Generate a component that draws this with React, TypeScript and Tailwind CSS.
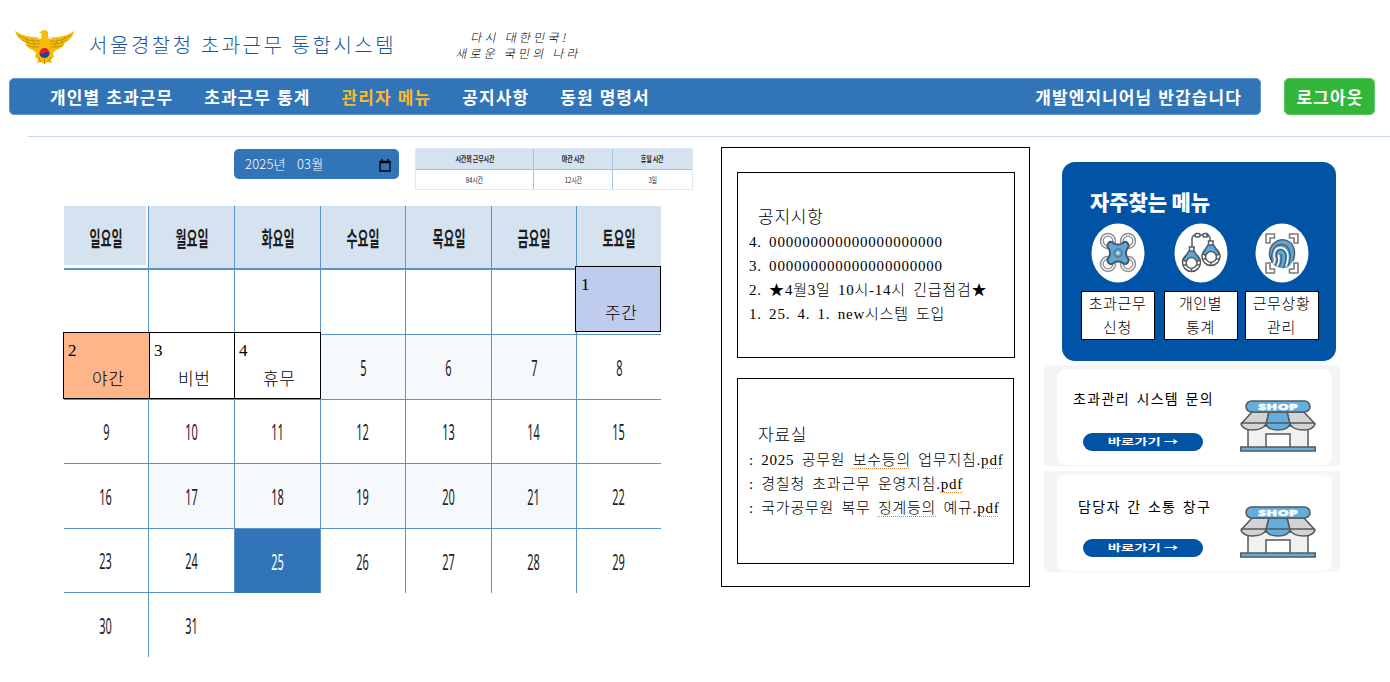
import React from "react";

const GOTHIC = "font-['Noto_Sans_CJK_KR',sans-serif]";
const BATANG = "font-['Liberation_Serif','Noto_Sans_CJK_KR',serif] font-light";

function Eagle() {
  return (
    <svg width="60" height="36" viewBox="0 0 60 36" className="block shrink-0">
      <path
        d="M0 2 Q9 8 24 8.500 L26 8 L27 4.500 L24 4 L27 1.500 Q31 0 33 3 L33 8 L36 8.500 Q51 8 59 2 Q58 10 50 13 Q49 19 41 21 L38 24 L39 28 L36 30 L37 34 L33 33 L29.500 35 L26 33 L22 34 L23 30 L20 28 L21 24 L18 21 Q11 19 10 13 Q2 10 0 2Z"
        fill="#f5bd0a"
      />
      <path
        d="M3 6 Q13 13 25 12 M7 11 Q15 16 25 15 M12 16 Q18 19 24 18 M56 6 Q47 13 35 12 M53 11 Q45 16 35 15 M48 16 Q42 19 36 18 M10 8 L14 14 M17 10 L20 17 M50 8 L46 14 M43 10 L40 17"
        stroke="#b98411"
        strokeWidth="0.800"
        fill="none"
      />
      <path d="M23 7.500 L27 8 L26 10 L23 10Z M36 7.500 L33 8 L34 10 L37 10Z" fill="#fff3c4" />
      <path d="M23 28 L26 33 M29.500 30 V35 M36 28 L33 33" stroke="#b98208" strokeWidth="0.900" />
      <circle cx="29.500" cy="24" r="5" fill="#e0242c" />
      <path d="M24.500 24 A5 5 0 0 0 34.500 24 Q32 22 29.500 24 T24.500 24Z" fill="#17479e" />
    </svg>
  );
}

function Header() {
  return (
    <header className="flex h-[78px] items-start pl-[15px]">
      <div className="pt-[29px]">
        <Eagle />
      </div>
      <h1 className={`${GOTHIC} ml-[14px] mt-[31px] w-[330px] text-[20px] font-light leading-[28px] tracking-[2.550px] whitespace-nowrap text-[#1a55a0]`}>
        서울경찰청 초과근무 통합시스템
      </h1>
      <p className={`${GOTHIC} ml-[39px] mt-[29px] w-[140px] -skew-x-12 text-[12px] font-light leading-[16px] tracking-[3.200px] whitespace-pre text-black`}>
        {"  다시 대한민국!\n새로운 국민의 나라"}
      </p>
    </header>
  );
}

const MENUS = [
  { label: "개인별 초과근무", on: false },
  { label: "초과근무 통계", on: false },
  { label: "관리자 메뉴", on: true },
  { label: "공지사항", on: false },
  { label: "동원 명령서", on: false },
];

function Nav() {
  return (
    <div className={`${GOTHIC} flex h-[37px] pl-[9px] text-[17px] font-bold tracking-[1.100px] whitespace-nowrap text-white`}>
      <nav className="flex w-[1252px] items-center gap-[31px] rounded-[5px] border border-[#5f96cd] bg-[#3175b8] pl-[40px] pr-[18px] [word-spacing:1px]">
        {MENUS.map((m) => (
          <a key={m.label} className={m.on ? "text-[#fdb924]" : ""}>
            {m.label}
          </a>
        ))}
        <span className="ml-auto">개발엔지니어님 반갑습니다</span>
      </nav>
      <button className="ml-[23px] w-[91px] rounded-[5px] border border-[#5fc765] bg-[#33b73b] pl-px">로그아웃</button>
    </div>
  );
}

function MonthPicker() {
  return (
    <div className="ml-[170px] mt-px flex h-[30px] w-[165px] shrink-0 items-center justify-between rounded-[5px] bg-[#3175b8] pl-[11px] pr-[8px] text-white">
      <span className={`${GOTHIC} text-[13px] font-light tracking-[0.200px] whitespace-pre [word-spacing:2.500px]`}>2025년  03월</span>
      <svg width="12" height="13" viewBox="0 0 12 13" className="mt-[2px]">
        <path d="M1 2.500 H11 V12 H1Z M1 3.500 H11 M3 0 V3 M9 0 V3" stroke="#000" strokeWidth="1.300" fill="none" />
      </svg>
    </div>
  );
}

function HoursTable() {
  const th = "flex items-center justify-center border-[#a3c2e2] bg-[#d5e3f0] border-b font-bold";
  const td = "flex items-center justify-center border-[#a3c2e2]";
  return (
    <div className={`${GOTHIC} ml-[16px] grid h-[42px] w-[278px] shrink-0 grid-cols-[118px_79px_79px] grid-rows-[21px_19px] border border-[#dfe9f4] text-[8px] tracking-[-0.200px] whitespace-nowrap text-[#222]`}>
      <div className={`${th} border-r`}><span className="scale-x-[0.750]">시간외 근무시간</span></div>
      <div className={`${th} border-r`}><span className="scale-x-[0.750]">야간 시간</span></div>
      <div className={th}><span className="scale-x-[0.750]">휴일 시간</span></div>
      <div className={`${td} border-r`}><span className="scale-x-[0.750]">84시간</span></div>
      <div className={`${td} border-r`}><span className="scale-x-[0.750]">12시간</span></div>
      <div className={td}><span className="scale-x-[0.750]">3일</span></div>
    </div>
  );
}

const DAYS = ["일요일", "월요일", "화요일", "수요일", "목요일", "금요일", "토요일"];

type Duty = { name: string; box: string };
const DUTIES: Record<number, Duty> = {
  1: { name: "주간", box: "-left-[2px] -top-[4px] h-[66px] w-[86px] bg-[#c0ccee] pl-[5px]" },
  2: { name: "야간", box: "-left-px -top-[3px] h-[67px] w-[87px] bg-[#ffb588] pl-[4px]" },
  3: { name: "비번", box: "left-0 -top-[3px] h-[67px] w-[86px] bg-white pl-[4px]" },
  4: { name: "휴무", box: "-left-px -top-[3px] h-[67px] w-[87px] bg-white pl-[4px]" },
};

function Calendar() {
  const cells = Array.from({ length: 42 }, (_, i) => i - 5);
  return (
    <div className={`${GOTHIC} mt-[16px] grid grid-cols-[85px_86px_86px_85px_86px_85px_84px] grid-rows-[64px_65px_65px_64px_65px_64px_64px]`}>
      {DAYS.map((d, i) => (
        <div
          key={d}
          className={`flex items-center justify-center border-b-2 border-[#5b92c9] bg-[#d5e3f0] text-[21px] font-bold text-[#1c1c1c] ${i < 6 ? "border-r" : ""} ${i === 0 ? "shadow-[inset_-2px_-3px_0_#fff]" : ""}`}
        >
          <span className="scale-x-[0.570] pt-px whitespace-nowrap">{d}</span>
        </div>
      ))}
      {cells.map((n, i) => {
        const col = i % 7;
        const row = Math.floor(i / 7);
        const duty = DUTIES[n];
        const tinted = (row === 1 || row === 3) && col > 0 && col < 6;
        const right = col < 6 && (row < 5 || col === 0);
        const bottom = row < 4 || (row === 4 && col < 2);
        const today = n === 25;
        return (
          <div
            key={i}
            className={`relative flex items-center justify-center border-[#5b92c9] ${right ? "border-r" : ""} ${bottom ? "border-b-[1.500px]" : ""} ${today ? "bg-[#3175b8] text-white" : tinted ? "bg-[#f5f9fc] text-[#222]" : "text-[#222]"}`}
          >
            {duty ? (
              <div className={`${BATANG} absolute z-10 border border-black text-black ${duty.box}`}>
                <div className="pt-[6px] text-[17px] leading-[24px]">{n}</div>
                <div className="pl-[24px] pt-[4px] text-[17px] leading-[26px] tracking-[0.700px]">{duty.name}</div>
              </div>
            ) : (
              n > 0 && n < 32 && (
                <span className="scale-x-[0.500] font-['Noto_Sans',sans-serif] text-[22px]">{n}</span>
              )
            )}
          </div>
        );
      })}
    </div>
  );
}

function Squiggle({ children }: { children: React.ReactNode }) {
  return (
    <span className="underline decoration-[#e8893a] decoration-dotted decoration-1 underline-offset-[3px] [text-decoration-skip-ink:none]">{children}</span>
  );
}

function Boards() {
  const line = "h-[24px] whitespace-nowrap";
  return (
    <section className={`${BATANG} ml-[29px] mt-[10px] h-[440px] w-[309px] border border-black pl-[15px] pt-[24px] text-[15px] leading-[24px] tracking-[0.770px] text-black [word-spacing:2.800px]`}>
      <div className="h-[186px] w-[278px] border border-black pl-[11px] pt-[32px]">
        <h2 className="h-[25px] pl-[9px] text-[17px] leading-[26px]">공지시항</h2>
        <p className={line}>4. 000000000000000000000</p>
        <p className={line}>3. 000000000000000000000</p>
        <p className={line}>2. ★4월3일 10시-14시 긴급점검★</p>
        <p className={line}>1. 25. 4. 1. new시스템 도입</p>
      </div>
      <div className="mt-[20px] h-[186px] w-[277px] border border-black pl-[11px] pt-[44px]">
        <h2 className="h-[25px] pl-[9px] text-[17px] leading-[26px]">자료실</h2>
        <p className={line}>: 2025 공무원 <Squiggle>보수등의</Squiggle> 업무지침.<Squiggle>pdf</Squiggle></p>
        <p className={line}>: 경칠청 초과근무 운영지침.<Squiggle>pdf</Squiggle></p>
        <p className={line}>: 국가공무원 복무 <Squiggle>징계등의</Squiggle> 예규.<Squiggle>pdf</Squiggle></p>
      </div>
    </section>
  );
}

function Drone() {
  const rotors = [[17, 18], [37, 18], [17, 41], [37, 41]];
  return (
    <svg width="54" height="60" viewBox="0 0 54 60" className="block">
      <ellipse cx="27" cy="30" rx="26.500" ry="29.500" fill="#fff" />
      {rotors.map(([x, y]) => (
        <g key={`${x}-${y}`} fill="none" stroke="#8d9093">
          <circle cx={x} cy={y} r="7.500" strokeWidth="1.500" />
          <circle cx={x} cy={y} r="4.800" strokeWidth="1.300" />
        </g>
      ))}
      <path
        d="M17.500 20 Q20 17.500 23 20.500 Q27 22.500 31 20.500 Q34 17.500 36.500 20 Q39 23 36 26 Q34 30 36 34 Q39 37 36.500 40 Q34 42.500 31 39.500 Q27 37.500 23 39.500 Q20 42.500 17.500 40 Q15 37 18 34 Q20 30 18 26 Q15 23 17.500 20Z"
        fill="#5aa7dd"
        stroke="#4c5359"
        strokeWidth="1.900"
      />
      <circle cx="27" cy="30" r="4" fill="#5aa7dd" stroke="#6f7579" strokeWidth="1.600" />
      <circle cx="27" cy="30" r="1.500" fill="#d8ecf9" />
    </svg>
  );
}

function Cuffs() {
  return (
    <svg width="54" height="60" viewBox="0 0 54 60" className="block">
      <ellipse cx="27" cy="30" rx="26.500" ry="29.500" fill="#fff" />
      <g stroke="#565b60" strokeWidth="1.500" fill="none">
        <path d="M18 25 V16 Q18 12 22 12 M32 12 Q36 12 36 16 V19" />
        <rect x="21" y="10.500" width="5" height="3.500" rx="1.200" />
        <rect x="29" y="10.500" width="5" height="3.500" rx="1.200" />
        <path d="M26 12 H29" />
        <circle cx="17.500" cy="39.500" r="9" fill="#fff" />
        <circle cx="37" cy="33.500" r="9" fill="#fff" />
        <path d="M15.500 28 V24 H20 V28 M34.500 22 V18 H39 V22" fill="#fff" />
        <path d="M9 37 L15 28 H20 L26 37 L22.500 38.500 Q17.500 31 12.500 38.500Z M28.500 31 L34 22 H39.500 L45.500 31 L42 32.500 Q37 25 32 32.500Z" fill="#5aa7dd" />
        <circle cx="17.500" cy="40" r="5.400" fill="#fff" />
        <circle cx="37" cy="34" r="5.400" fill="#fff" />
        <path d="M9 42 H12.500 M22.500 42 H26 M17.500 45 V48.500 M28.500 36 H32 M42 36 H45.500 M37 39 V42.500" />
      </g>
    </svg>
  );
}

function Finger() {
  return (
    <svg width="54" height="60" viewBox="0 0 54 60" className="block">
      <ellipse cx="27" cy="30" rx="26.500" ry="29.500" fill="#fff" />
      <g fill="#fff" stroke="#777b7f" strokeWidth="1.600" strokeLinejoin="round">
        <path d="M11 20 V11 H19.500 V15 H15 V20Z M34.500 11 H43 V20 H39 V15 H34.500Z M11 40 V50 H19.500 V46 H15 V40Z M43 40 V50 H34.500 V46 H39 V40Z" />
      </g>
      <path d="M17 40 Q11 30 17 22 Q26 13 35 20 Q41 27 39 36 Q36 43 31 45 Q22 46 17 40Z" fill="#5aa7dd" />
      <g fill="none" stroke="#545c63" strokeWidth="1.400">
        <path d="M16 37 Q12 28 18 21 Q27 13 36 20 Q42 28 38 38" />
        <path d="M17 40 Q15 27 22 22.500 Q31 19 34 27 Q37 34 33 43" />
        <path d="M20 43 Q24 38 21 33 Q21 27 26 26.500 Q31 27 31 34 Q31 40 28 45 M24 44 Q27 40 26 31" />
      </g>
      <path d="M18 41 Q21 38 19 33 Q19 25 25 24.500 Q32 25 33 33 Q33 39 31 43 M22 43 Q25 39 23.500 32" stroke="#fff" strokeWidth="1.500" fill="none" />
    </svg>
  );
}

const QUICK = [
  { icon: <Drone />, top: "초과근무", bottom: "신청" },
  { icon: <Cuffs />, top: "개인별", bottom: "통계" },
  { icon: <Finger />, top: "근무상황", bottom: "관리" },
];

function QuickMenu() {
  return (
    <div className="ml-[18px] h-[199px] w-[274px] rounded-[13px] bg-[#0053a5] pt-[25px]">
      <h2 className={`${GOTHIC} h-[36px] pl-[28px] text-[21px] font-black leading-[29px] tracking-[-0.100px] whitespace-nowrap text-white`}>
        자주찾는 메뉴
      </h2>
      <div className="grid grid-cols-[83px_81px_74px] pl-[19px]">
        {QUICK.map((q) => (
          <div key={q.top} className="flex w-[74px] flex-col items-center">
            {q.icon}
            <div className={`${GOTHIC} mt-[8px] h-[49px] w-[74px] border border-black bg-white text-center text-[15px] font-light leading-[24px] tracking-[0.600px] whitespace-nowrap text-black`}>
              <div className="-ml-px -mt-px">{q.top}</div>
              <div className="-ml-px">{q.bottom}</div>
            </div>
          </div>
        ))}
      </div>
    </div>
  );
}

function Shop() {
  return (
    <svg width="76" height="52" viewBox="0 0 76 52" className="block">
      <g stroke="#55585a" strokeWidth="1.500">
        <path d="M8 26 H68 V48 H8Z" fill="#f1f1f2" />
        <path d="M26 48 V34 H50 V48" fill="#fff" />
        <path d="M12 12 L1 24 Q3 30 12 30 Q23 30 26 24 L29 12Z M47 12 L50 24 Q53 30 64 30 Q73 30 75 24 L64 12Z" fill="#d1d3d4" />
        <path d="M29 12 L26 24 Q28 30 38 30 Q48 30 50 24 L47 12Z" fill="#64aede" />
        <path d="M1 23 H75" />
        <rect x="6" y="1" width="64" height="11" rx="5.500" fill="#64aede" />
        <rect x="0.800" y="47" width="74.400" height="4" fill="#64aede" />
      </g>
      <text x="38" y="10" textAnchor="middle" textLength="40" lengthAdjust="spacingAndGlyphs" fontSize="9.500" fontWeight="900" fontFamily="Open Sans, sans-serif" fill="#fff" stroke="#fff" strokeWidth="0.300">
        SHOP
      </text>
    </svg>
  );
}

function LinkCard({ title, pad }: { title: string; pad: string }) {
  return (
    <div className="h-[101px] w-[296px] bg-[#f5f5f5] pl-[13px] pt-[4px]">
      <div className="flex h-[96px] w-[275px] justify-between rounded-[9px] bg-white pr-[16px]">
        <div className={`${GOTHIC} ${pad}`}>
          <h3 className="h-[20px] text-[14px] font-normal leading-[20px] tracking-[1.350px] whitespace-nowrap text-black [word-spacing:2px]">{title}</h3>
        </div>
        <div className="pt-[31px]">
          <Shop />
        </div>
      </div>
      <button className={`${GOTHIC} relative -top-[32px] left-[26px] flex h-[18px] w-[120px] items-center justify-center rounded-[9px] bg-[#0053a5] text-[9px] font-bold text-white`}>
        <span className="scale-x-[1.600] whitespace-nowrap">바로가기 →</span>
      </button>
    </div>
  );
}

export default function App() {
  return (
    <div className="h-[682px] w-[1390px] overflow-hidden bg-white">
      <Header />
      <Nav />
      <div className="ml-[28px] mt-[21px] h-px bg-[#c9d9ec]" />
      <main className="flex items-start pl-[64px]">
        <section className="w-[628px] shrink-0 pt-[11px]">
          <div className="flex items-start">
            <MonthPicker />
            <HoursTable />
          </div>
          <Calendar />
        </section>
        <Boards />
        <aside className="ml-[14px] flex flex-col pt-[25px]">
          <QuickMenu />
          <div className="mt-[4px] flex flex-col gap-[5px]">
            <LinkCard title="초과관리 시스템 문의" pad="pl-[16px] pt-[19px]" />
            <LinkCard title="담당자 간 소통 창구" pad="pl-[21px] pt-[21px]" />
          </div>
        </aside>
      </main>
    </div>
  );
}
